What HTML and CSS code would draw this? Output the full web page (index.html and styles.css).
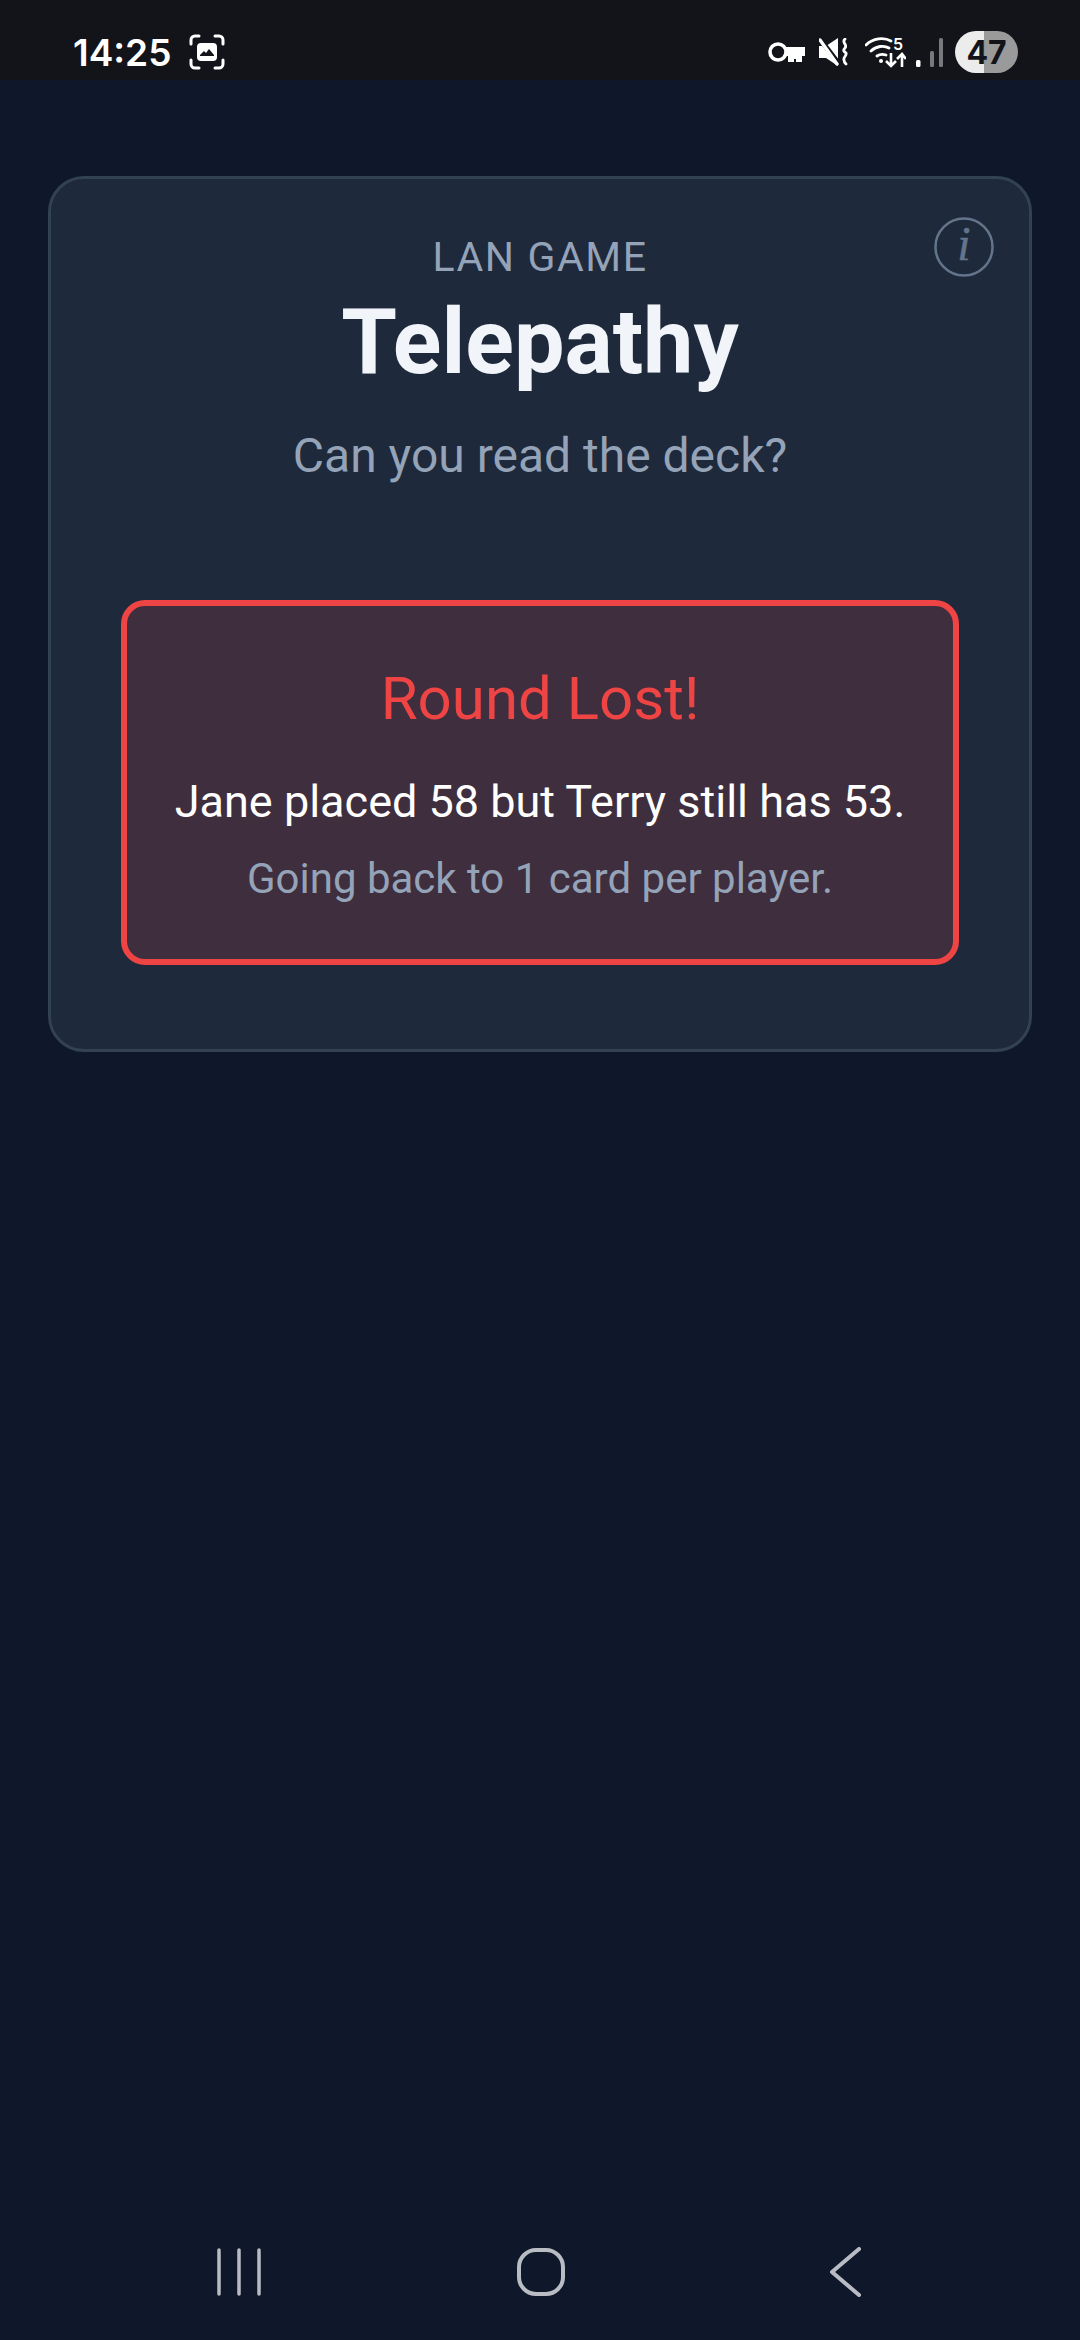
FILE: index.html
```html
<!DOCTYPE html>
<html lang="en">
<head>
    <meta charset="UTF-8">
    <meta name="viewport" content="width=device-width, initial-scale=1.0">
    <title>Telepathy</title>
    <link rel="stylesheet" href="styles.css">
</head>
<body>
    <div class="status-bar">
        <div class="status-left">
            <span class="clock">14:25</span>
            <svg class="shot-icon" width="36" height="36" viewBox="0 0 36 36" fill="none">
                <path d="M2 10V6a4 4 0 0 1 4-4h4M26 2h4a4 4 0 0 1 4 4v4M34 26v4a4 4 0 0 1-4 4h-4M10 34H6a4 4 0 0 1-4-4v-4" stroke="#fff" stroke-width="3" stroke-linecap="round"/>
                <rect x="8" y="9" width="20" height="18" rx="4" fill="#fff"/>
                <path d="M11 21l4-4 2 2 3-4 5 6v1H11z" fill="#121419"/>
            </svg>
        </div>
        <div class="status-right">
            <svg class="ic-key" width="37" height="20" viewBox="0 0 37 20" fill="none">
                <circle cx="10" cy="10" r="8" stroke="#fff" stroke-width="3.6"/>
                <path d="M17 5h20v9h-3v6h-6v-3h-2v3h-6v-6h-3z" fill="#fff"/>
            </svg>
            <svg class="ic-mute" width="29" height="28" viewBox="0 0 29 28" fill="none">
                <path d="M0 8h7l12-8v28L7 20H0z" fill="#fff"/>
                <path d="M1 1l19 25" stroke="#121419" stroke-width="5"/>
                <path d="M1 2l17 24" stroke="#fff" stroke-width="3.4" stroke-linecap="round"/>
                <path d="M26 1c-4 4 3 5 0 9-3 3 0 4 1 5 1 3-3 4-2 7 0 2 1 3 2 4" stroke="#fff" stroke-width="2.8" stroke-linecap="round"/>
            </svg>
            <svg class="ic-wifi" width="41" height="36" viewBox="0 -3 41 36" fill="none">
                <path d="M1 8c7-7 18-8 25-4M6 14c5-5 13-6 18-3M12 19c3-2 6-2 9-1" stroke="#fff" stroke-width="2.8" stroke-linecap="round"/>
                <circle cx="16" cy="24" r="2" fill="#fff"/>
                <path d="M26 16v13M21 24l5 5 5-5M37 30V17M32 22l5-5 4 5" stroke="#fff" stroke-width="2.6"/>
                <text x="28" y="13" class="wifi-five">5</text>
            </svg>
            <svg class="ic-signal" width="27" height="29" viewBox="0 0 27 29">
                <rect x="0" y="22" width="4.5" height="7" rx="1.5" fill="#fff"/>
                <rect x="14" y="13" width="4" height="16" rx="1.5" fill="#77797c"/>
                <rect x="23" y="0" width="4" height="29" rx="1.5" fill="#77797c"/>
            </svg>
            <div class="battery">47</div>
        </div>
    </div>

    <main class="content">
        <section class="card">
            <button class="info-btn">
                <svg width="60" height="60" viewBox="0 0 60 60">
                    <circle cx="30" cy="30" r="28.5" fill="none" stroke="#64748b" stroke-width="2.5"/>
                    <text x="30" y="43" text-anchor="middle" class="info-i">i</text>
                </svg>
            </button>
            <div class="eyebrow">LAN GAME</div>
            <h1>Telepathy</h1>
            <p class="tagline">Can you read the deck?</p>
            <div class="result-box">
                <h2>Round Lost!</h2>
                <p class="result-msg">Jane placed 58 but Terry still has 53.</p>
                <p class="result-sub">Going back to 1 card per player.</p>
            </div>
        </section>
    </main>

    <nav class="nav-bar">
        <svg width="46" height="48" viewBox="0 0 46 48" fill="none" stroke="#b9bcc3" stroke-width="3.5" stroke-linecap="round">
            <path d="M3 2v44M23 2v44M43 2v44"/>
        </svg>
        <svg width="48" height="48" viewBox="0 0 48 48" fill="none" stroke="#b9bcc3" stroke-width="4">
            <rect x="2" y="2" width="44" height="44" rx="17"/>
        </svg>
        <svg class="nav-back" width="32" height="50" viewBox="0 0 32 50" fill="none" stroke="#b9bcc3" stroke-width="4" stroke-linecap="round" stroke-linejoin="round">
            <path d="M30 2L3 25l27 23"/>
        </svg>
    </nav>
</body>
</html>
```

FILE: styles.css
```css
* {
    box-sizing: border-box;
}

body {
    margin: 0;
    width: 1080px;
    height: 2340px;
    display: flex;
    flex-direction: column;
    font-family: 'Roboto', sans-serif;
    background-color: #0f172a;
    color: #f1f5f9;
    overflow: hidden;
}

.status-bar {
    height: 80px;
    flex-shrink: 0;
    background: #121419;
    color: #fff;
    display: flex;
    justify-content: space-between;
    align-items: center;
    padding: 24px 62px 0 73px;
}

.status-left, .status-right {
    display: flex;
    align-items: center;
}

.status-left {
    gap: 18px;
}

.clock {
    font-family: 'Inter', sans-serif;
    font-size: 37px;
    font-weight: 600;
}

.ic-mute {
    margin-left: 14px;
}

.ic-wifi {
    margin-left: 17px;
}

.ic-signal {
    margin-left: 10px;
}

.wifi-five {
    font-family: 'Inter', sans-serif;
    font-size: 16px;
    font-weight: 600;
    fill: #fff;
}

.battery {
    width: 63px;
    height: 42px;
    border-radius: 21px;
    margin-left: 12px;
    background: linear-gradient(90deg, #ececec 0 46%, #9a9a9a 46% 100%);
    color: #121419;
    font-family: 'Inter', sans-serif;
    font-size: 32px;
    font-weight: 700;
    display: flex;
    align-items: center;
    justify-content: center;
}

.content {
    flex: 1;
    padding: 96px 48px 0;
}

.card {
    position: relative;
    background: #1e293b;
    border: 3px solid #334155;
    border-radius: 36px;
    padding: 54px 70px 84px;
    text-align: center;
}

.info-btn {
    position: absolute;
    top: 38px;
    right: 35px;
    width: 60px;
    height: 60px;
    padding: 0;
    border: none;
    background: none;
}

.info-i {
    font-family: 'Liberation Serif', serif;
    font-style: italic;
    font-size: 48px;
    fill: #64748b;
    stroke: #64748b;
    stroke-width: 0.5px;
}

.eyebrow {
    font-size: 41px;
    line-height: 48px;
    letter-spacing: 1.6px;
    color: #94a3b8;
}

h1 {
    margin: 10px 0 0;
    font-size: 90px;
    font-weight: 700;
    line-height: 104px;
    color: #f1f5f9;
}

.tagline {
    margin: 33px 0 0;
    font-size: 48px;
    line-height: 56px;
    color: #94a3b8;
}

.result-box {
    margin-top: 116px;
    padding: 60px 20px 56px;
    background: #3f2e3e;
    border: 6px solid #ef4444;
    border-radius: 24px;
}

h2 {
    margin: 0;
    font-size: 60px;
    font-weight: 400;
    line-height: 66px;
    color: #ef4444;
}

.result-msg {
    margin: 44px 0 0;
    font-size: 45px;
    line-height: 52px;
    color: #fff;
}

.result-sub {
    margin: 27px 0 0;
    font-size: 42px;
    line-height: 48px;
    color: #94a3b8;
}

.nav-bar {
    height: 92px;
    margin-bottom: 22px;
    flex-shrink: 0;
    display: flex;
    align-items: center;
    gap: 255px;
    padding: 0 0 0 216px;
}

.nav-back {
    margin-left: 9px;
}
```
